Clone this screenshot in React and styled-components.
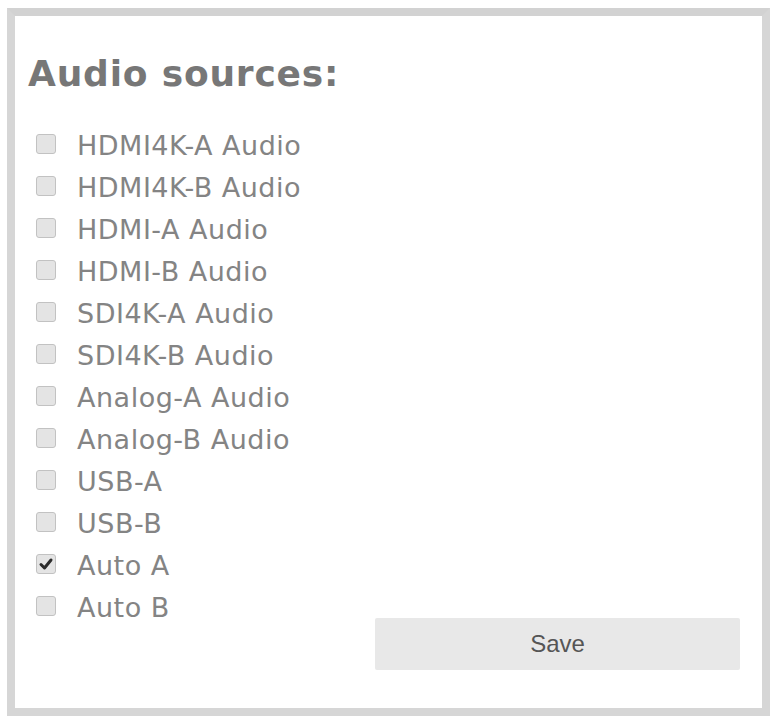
import React, { useState } from "react";
import styled, { createGlobalStyle } from "styled-components";

const sources = [
  "HDMI4K-A Audio",
  "HDMI4K-B Audio",
  "HDMI-A Audio",
  "HDMI-B Audio",
  "SDI4K-A Audio",
  "SDI4K-B Audio",
  "Analog-A Audio",
  "Analog-B Audio",
  "USB-A",
  "USB-B",
  "Auto A",
  "Auto B",
];

const App = () => {
  const [checked, setChecked] = useState(["Auto A"]);

  const toggle = (name) => {
    setChecked((prev) =>
      prev.includes(name) ? prev.filter((n) => n !== name) : [...prev, name]
    );
  };

  return (
    <>
      <GlobalStyle />
      <Panel>
        <Title>Audio sources:</Title>
        <List>
          {sources.map((name) => {
            const on = checked.includes(name);
            return (
              <Row key={name} onClick={() => toggle(name)}>
                <Box>
                  {on && (
                    <svg width="16" height="16" viewBox="0 0 16 16">
                      <path
                        d="M3 8.5 L6.5 12 L13 4"
                        fill="none"
                        stroke="#2b2b2b"
                        strokeWidth="3"
                        strokeLinecap="round"
                        strokeLinejoin="round"
                      />
                    </svg>
                  )}
                </Box>
                <Label>{name}</Label>
              </Row>
            );
          })}
        </List>
        <Footer>
          <SaveBtn>Save</SaveBtn>
        </Footer>
      </Panel>
    </>
  );
};

export default App;

const GlobalStyle = createGlobalStyle`
  body {
    margin: 0;
    background: #ffffff;
    font-family: "DejaVu Sans", Verdana, sans-serif;
  }
`;

const Panel = styled.div`
  margin: 8px 3px 0 7px;
  width: 763px;
  height: 708px;
  box-sizing: border-box;
  border: 8px solid #d6d6d6;
  border-top-color: #d2d2d2;
  background: #ffffff;
  padding: 36px 22px 0 13px;
  display: flex;
  flex-direction: column;
`;

const Title = styled.h2`
  margin: 0;
  font-family: "DejaVu Sans", Verdana, sans-serif;
  font-weight: bold;
  font-size: 36px;
  line-height: 44px;
  letter-spacing: 0.8px;
  color: #777777;
`;

const List = styled.div`
  display: flex;
  flex-direction: column;
  margin-top: 28px;
  padding-left: 8px;
`;

const Row = styled.div`
  display: flex;
  align-items: center;
  height: 42px;
  gap: 21px;
  cursor: pointer;
`;

const Box = styled.span`
  width: 18px;
  height: 18px;
  border: 1px solid #c2c2c2;
  border-radius: 3px;
  background: #e4e4e4;
  display: flex;
  align-items: center;
  justify-content: center;
  flex: none;
  margin-top: -2px;
`;

const Label = styled.span`
  font-size: 27px;
  letter-spacing: 0.5px;
  color: #848484;
  white-space: nowrap;
`;

const Footer = styled.div`
  display: flex;
  justify-content: flex-end;
  margin-top: -10px;
`;

const SaveBtn = styled.button`
  width: 365px;
  height: 52px;
  border: none;
  border-radius: 2px;
  background: #e8e8e8;
  color: #555555;
  font-family: "Liberation Sans", Arial, sans-serif;
  font-size: 24px;
  cursor: pointer;
`;
